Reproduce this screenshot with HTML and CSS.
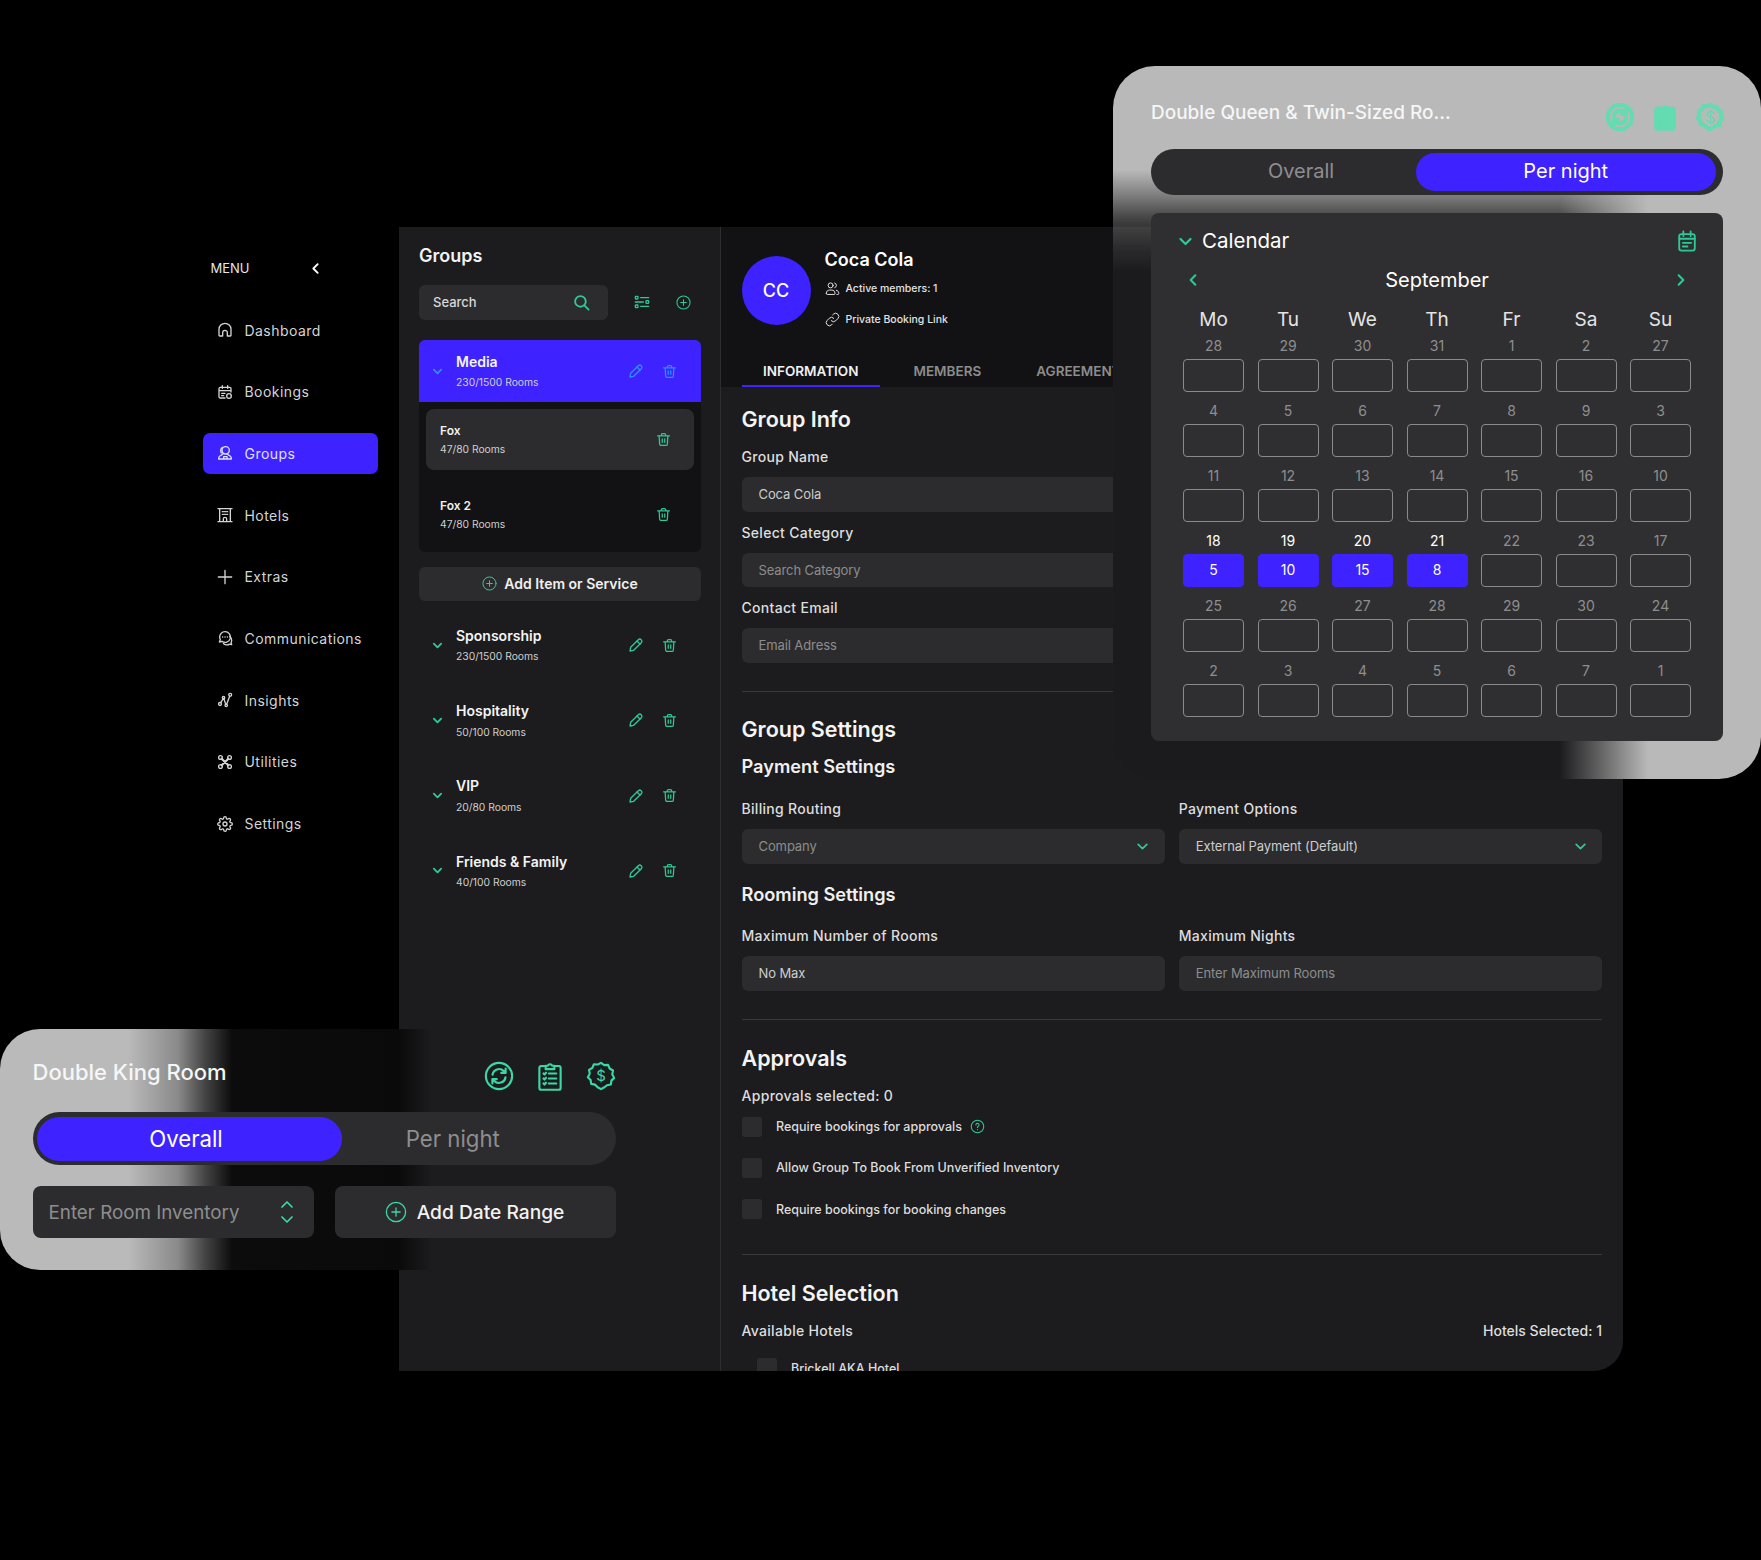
FILE: index.html
```html
<!DOCTYPE html>
<html>
<head>
    <title>Groups</title>
    <link rel="stylesheet" href="styles.css">
</head>
<body>
    <svg class="icon-defs">
        <symbol id="i-home" viewBox="0 0 24 24"><path d="M3 20V11a9 9 0 0 1 18 0v9a1 1 0 0 1-1 1h-4.500v-5a3.500 3.500 0 0 0-7 0v5H4a1 1 0 0 1-1-1Z"/></symbol>
        <symbol id="i-bookings" viewBox="0 0 24 24"><path d="M12 21H5a2 2 0 0 1-2-2V7a2 2 0 0 1 2-2h14a2 2 0 0 1 2 2v5M3 10h18M8 2.500v4M16 2.500v4M7 14h5M7 17.500h3"/><circle cx="18" cy="18" r="3.500"/></symbol>
        <symbol id="i-groups" viewBox="0 0 24 24"><circle cx="13" cy="8" r="5.500"/><path d="M9 13c-.3 2.500-6 2-6.500 6.500V21h19v-1.500c-.5-4.500-6-4-6.500-6.500M8 3.500C6.500 4.500 5.500 6 5.500 8.500c0 1.500.5 2.500 1 3.500M10 21v-3.500h5V21"/></symbol>
        <symbol id="i-hotel" viewBox="0 0 24 24"><path d="M1.500 22h21M1.500 2.500h21M4 2.500V22M20 2.500V22M8 7h1.500M11.250 7h1.500M14.500 7H16M8 11h1.500M11.250 11h1.500M14.500 11H16M9.500 22v-4a2.500 2.500 0 0 1 5 0v4"/></symbol>
        <symbol id="i-plus" viewBox="0 0 24 24"><path d="M12 2v20M2 12h20"/></symbol>
        <symbol id="i-comm" viewBox="0 0 24 24"><path d="M12 2.500a8 8 0 0 0-8 8c0 1.500.4 2.800 1 4l-1.500 3.500 4-1a8 8 0 1 0 4.500-14.500Z"/><path d="M19 9.500c2 1.500 3 3.500 3 6 0 1.300-.3 2.300-.8 3.300l.8 3.200-3.300-.8c-1.500 1-3.200 1.300-5 1-1.700-.3-3-1-4-2"/><path d="M8.500 10.500h.01M12 10.500h.01M15.500 10.500h.01" stroke-width="2.200"/></symbol>
        <symbol id="i-insights" viewBox="0 0 24 24"><path d="M5.500 15.800 9.500 10M10.500 10.500l2.600 8M14.500 18.500l4.500-12"/><circle cx="4.500" cy="18" r="2.200"/><circle cx="9.800" cy="8.500" r="1.800"/><circle cx="13.800" cy="20" r="1.800"/><circle cx="19.800" cy="4.200" r="2.200"/></symbol>
        <symbol id="i-utilities" viewBox="0 0 24 24"><path d="M7 7l10 10M17 7 7 17" stroke-width="3.200"/><circle cx="5.200" cy="5.200" r="2.800"/><circle cx="18.800" cy="5.200" r="2.800"/><circle cx="5.200" cy="18.800" r="2.800"/><circle cx="18.800" cy="18.800" r="2.800"/></symbol>
        <symbol id="i-settings" viewBox="0 0 24 24"><circle cx="12" cy="12" r="3"/><path d="M19.400 15a1.650 1.650 0 0 0 .33 1.820l.06.06a2 2 0 0 1 0 2.830 2 2 0 0 1-2.830 0l-.06-.06a1.650 1.650 0 0 0-1.820-.33 1.650 1.650 0 0 0-1 1.510V21a2 2 0 0 1-2 2 2 2 0 0 1-2-2v-.09A1.650 1.650 0 0 0 9 19.400a1.650 1.650 0 0 0-1.820.33l-.06.06a2 2 0 0 1-2.830 0 2 2 0 0 1 0-2.830l.06-.06a1.650 1.650 0 0 0 .33-1.820 1.650 1.650 0 0 0-1.510-1H3a2 2 0 0 1-2-2 2 2 0 0 1 2-2h.09A1.650 1.650 0 0 0 4.600 9a1.650 1.650 0 0 0-.33-1.820l-.06-.06a2 2 0 0 1 0-2.830 2 2 0 0 1 2.830 0l.06.06a1.650 1.650 0 0 0 1.820.33H9a1.650 1.650 0 0 0 1-1.510V3a2 2 0 0 1 2-2 2 2 0 0 1 2 2v.09a1.650 1.650 0 0 0 1 1.510 1.650 1.650 0 0 0 1.820-.33l.06-.06a2 2 0 0 1 2.830 0 2 2 0 0 1 0 2.830l-.06.06a1.650 1.650 0 0 0-.33 1.820V9a1.650 1.650 0 0 0 1.510 1H21a2 2 0 0 1 2 2 2 2 0 0 1-2 2h-.09a1.650 1.650 0 0 0-1.510 1Z"/></symbol>
        <symbol id="i-search" viewBox="0 0 24 24"><circle cx="10.500" cy="10.500" r="7.500"/><path d="m16 16 6 6"/></symbol>
        <symbol id="i-filter" viewBox="0 0 24 24"><path d="M10 5.500h12M2 12h12M10 18.500h12"/><rect x="2" y="3.500" width="4" height="4" rx="1"/><rect x="18" y="10" width="4" height="4" rx="1"/><rect x="2" y="16.500" width="4" height="4" rx="1"/></symbol>
        <symbol id="i-add" viewBox="0 0 24 24"><circle cx="12" cy="12" r="10.500"/><path d="M12 7.500v9M7.500 12h9"/></symbol>
        <symbol id="i-down" viewBox="0 0 24 24"><path d="m4 8 8 8 8-8"/></symbol>
        <symbol id="i-up" viewBox="0 0 24 24"><path d="m4 16 8-8 8 8"/></symbol>
        <symbol id="i-left" viewBox="0 0 24 24"><path d="m16 4-8 8 8 8"/></symbol>
        <symbol id="i-right" viewBox="0 0 24 24"><path d="m8 4 8 8-8 8"/></symbol>
        <symbol id="i-pencil" viewBox="0 0 24 24"><path d="M3 21l1-5.500L15.500 4a3 3 0 0 1 4.200 0l.3.300a3 3 0 0 1 0 4.200L8.500 20Z"/><path d="m13.500 6 4.500 4.500"/></symbol>
        <symbol id="i-trash" viewBox="0 0 24 24"><path d="M2.500 6h19M8.500 6V4.500a2 2 0 0 1 2-2h3a2 2 0 0 1 2 2V6M5 6l.8 13a2.500 2.500 0 0 0 2.500 2.500h7.400a2.500 2.500 0 0 0 2.500-2.500L19 6M10 11v5.500M14 11v5.500"/></symbol>
        <symbol id="i-users" viewBox="0 0 24 24"><circle cx="9" cy="7" r="4"/><path d="M2 19.500c0-3 2.500-5 5-5h4c2.500 0 5 2 5 5v.5a1.500 1.500 0 0 1-1.500 1.500h-11A1.500 1.500 0 0 1 2 20ZM15.500 3.200a4 4 0 0 1 0 7.600M18 14.800c2.500.5 4 2.300 4 4.700v.5a1.500 1.500 0 0 1-1.500 1.500H19"/></symbol>
        <symbol id="i-link" viewBox="0 0 24 24"><path d="M10 14a5 5 0 0 0 7.100 0l3.400-3.400A5 5 0 0 0 13.400 3.500l-1.200 1.200"/><path d="M14 10a5 5 0 0 0-7.100 0l-3.400 3.400a5 5 0 0 0 7.100 7.100l1.200-1.200"/></symbol>
        <symbol id="i-refresh" viewBox="0 0 24 24"><circle cx="12" cy="12" r="10.500"/><path d="M6.800 11a5.300 5.300 0 0 1 9-3l1.500 1.500M17.300 6v3.500h-3.500M17.200 13a5.300 5.300 0 0 1-9 3l-1.500-1.500M6.700 18v-3.500h3.500"/></symbol>
        <symbol id="i-clipboard" viewBox="0 0 24 24"><path d="M8.500 4H5a1.500 1.500 0 0 0-1.500 1.500v16A1.500 1.500 0 0 0 5 23h14a1.500 1.500 0 0 0 1.500-1.500v-16A1.500 1.500 0 0 0 19 4h-3.500"/><path d="M8.500 6.500V3.800h1.800a1.800 1.800 0 0 1 3.400 0h1.800v2.700ZM11 10h6M11 14h6M11 18h6M6.800 10l.8.800 1.200-1.400M6.800 14l.8.800 1.200-1.400M6.800 18l.8.800 1.200-1.400"/></symbol>
        <symbol id="i-badge" viewBox="0 0 24 24"><path d="M12 1.500l2.600 1.800 3.100-.2 1.200 2.900 2.700 1.600-.6 3 1.500 2.900-2.200 2.200-.4 3.100-3.100.6L14.700 21 12 22.500l-2.700-1.500-2.100-2.100-3.100-.6-.4-3.100-2.200-2.200 1.500-2.900-.6-3 2.700-1.600 1.200-2.900 3.100.2Z"/></symbol>
        <symbol id="i-cal-note" viewBox="0 0 24 24"><rect x="3.500" y="4.500" width="17" height="18" rx="2.500"/><path d="M8 1.500v5M16 1.500v5M3.500 9.500h17M7.500 14h9M7.500 18h5"/></symbol>
        <symbol id="i-help" viewBox="0 0 24 24"><circle cx="12" cy="12" r="10"/><path d="M9.500 9.500a2.500 2.500 0 1 1 3.800 2.100c-.8.500-1.300 1-1.300 2M12 17h.01"/></symbol>
    </svg>

    <div class="app">
        <aside class="sidebar">
            <div class="menu-head">
                <span>MENU</span>
                <svg class="ico ico-back"><use href="#i-left"/></svg>
            </div>
            <nav class="nav">
                <a class="nav-item"><svg class="ico"><use href="#i-home"/></svg>Dashboard</a>
                <a class="nav-item"><svg class="ico"><use href="#i-bookings"/></svg>Bookings</a>
                <a class="nav-item active"><svg class="ico"><use href="#i-groups"/></svg>Groups</a>
                <a class="nav-item"><svg class="ico"><use href="#i-hotel"/></svg>Hotels</a>
                <a class="nav-item"><svg class="ico"><use href="#i-plus"/></svg>Extras</a>
                <a class="nav-item"><svg class="ico"><use href="#i-comm"/></svg>Communications</a>
                <a class="nav-item"><svg class="ico"><use href="#i-insights"/></svg>Insights</a>
                <a class="nav-item"><svg class="ico"><use href="#i-utilities"/></svg>Utilities</a>
                <a class="nav-item"><svg class="ico"><use href="#i-settings"/></svg>Settings</a>
            </nav>
        </aside>

        <section class="groups">
            <h2 class="groups-title">Groups</h2>
            <div class="search-row">
                <div class="search-box">
                    <span>Search</span>
                    <svg class="ico ico-green"><use href="#i-search"/></svg>
                </div>
                <svg class="ico ico-green filter-btn"><use href="#i-filter"/></svg>
                <svg class="ico ico-green add-btn"><use href="#i-add"/></svg>
            </div>

            <div class="group-row selected">
                <svg class="ico chev"><use href="#i-down"/></svg>
                <div class="group-text">
                    <div class="group-name">Media</div>
                    <div class="group-sub">230/1500 Rooms</div>
                </div>
                <svg class="ico edit"><use href="#i-pencil"/></svg>
                <svg class="ico trash"><use href="#i-trash"/></svg>
            </div>
            <div class="sub-list">
                <div class="sub-item current">
                    <div>
                        <div class="sub-name">Fox</div>
                        <div class="group-sub">47/80 Rooms</div>
                    </div>
                    <svg class="ico ico-green trash"><use href="#i-trash"/></svg>
                </div>
                <div class="sub-item">
                    <div>
                        <div class="sub-name">Fox 2</div>
                        <div class="group-sub">47/80 Rooms</div>
                    </div>
                    <svg class="ico ico-green trash"><use href="#i-trash"/></svg>
                </div>
            </div>
            <div class="add-item">
                <svg class="ico ico-green"><use href="#i-add"/></svg>
                Add Item or Service
            </div>

            <div class="group-rows">
                <div class="group-row">
                    <svg class="ico ico-green chev"><use href="#i-down"/></svg>
                    <div class="group-text">
                        <div class="group-name">Sponsorship</div>
                        <div class="group-sub">230/1500 Rooms</div>
                    </div>
                    <svg class="ico ico-green edit"><use href="#i-pencil"/></svg>
                    <svg class="ico ico-green trash"><use href="#i-trash"/></svg>
                </div>
                <div class="group-row">
                    <svg class="ico ico-green chev"><use href="#i-down"/></svg>
                    <div class="group-text">
                        <div class="group-name">Hospitality</div>
                        <div class="group-sub">50/100 Rooms</div>
                    </div>
                    <svg class="ico ico-green edit"><use href="#i-pencil"/></svg>
                    <svg class="ico ico-green trash"><use href="#i-trash"/></svg>
                </div>
                <div class="group-row">
                    <svg class="ico ico-green chev"><use href="#i-down"/></svg>
                    <div class="group-text">
                        <div class="group-name">VIP</div>
                        <div class="group-sub">20/80 Rooms</div>
                    </div>
                    <svg class="ico ico-green edit"><use href="#i-pencil"/></svg>
                    <svg class="ico ico-green trash"><use href="#i-trash"/></svg>
                </div>
                <div class="group-row">
                    <svg class="ico ico-green chev"><use href="#i-down"/></svg>
                    <div class="group-text">
                        <div class="group-name">Friends &amp; Family</div>
                        <div class="group-sub">40/100 Rooms</div>
                    </div>
                    <svg class="ico ico-green edit"><use href="#i-pencil"/></svg>
                    <svg class="ico ico-green trash"><use href="#i-trash"/></svg>
                </div>
            </div>
        </section>

        <main class="detail">
            <header class="detail-head">
                <div class="profile">
                    <div class="avatar">CC</div>
                    <div>
                        <div class="profile-name">Coca Cola</div>
                        <div class="profile-line first"><svg class="ico"><use href="#i-users"/></svg>Active members: 1</div>
                        <div class="profile-line"><svg class="ico"><use href="#i-link"/></svg>Private Booking Link</div>
                    </div>
                </div>
                <div class="tabs">
                    <div class="tab active">INFORMATION</div>
                    <div class="tab">MEMBERS</div>
                    <div class="tab">AGREEMENTS</div>
                </div>
            </header>

            <div class="detail-body">
                <h3 class="h-big info-title">Group Info</h3>
                <label class="lbl lbl-first">Group Name</label>
                <div class="field filled">Coca Cola</div>
                <label class="lbl">Select Category</label>
                <div class="field">Search Category</div>
                <label class="lbl">Contact Email</label>
                <div class="field">Email Adress</div>
                <hr class="rule rule-a">

                <h3 class="h-big settings-title">Group Settings</h3>
                <h4 class="h-mid payment-title">Payment Settings</h4>
                <div class="two-col billing">
                    <div>
                        <label class="lbl lbl-top">Billing Routing</label>
                        <div class="field select">Company<svg class="ico ico-green"><use href="#i-down"/></svg></div>
                    </div>
                    <div>
                        <label class="lbl lbl-top">Payment Options</label>
                        <div class="field select filled">External Payment (Default)<svg class="ico ico-green"><use href="#i-down"/></svg></div>
                    </div>
                </div>
                <h4 class="h-mid rooming-title">Rooming Settings</h4>
                <div class="two-col rooming">
                    <div>
                        <label class="lbl lbl-top">Maximum Number of Rooms</label>
                        <div class="field filled">No Max</div>
                    </div>
                    <div>
                        <label class="lbl lbl-top">Maximum Nights</label>
                        <div class="field">Enter Maximum Rooms</div>
                    </div>
                </div>
                <hr class="rule rule-b">

                <h3 class="h-big approvals-title">Approvals</h3>
                <label class="lbl approvals-count">Approvals selected: 0</label>
                <div class="checks">
                    <div class="check"><span class="box"></span>Require bookings for approvals<svg class="ico ico-green help"><use href="#i-help"/></svg></div>
                    <div class="check"><span class="box"></span>Allow Group To Book From Unverified Inventory</div>
                    <div class="check"><span class="box"></span>Require bookings for booking changes</div>
                </div>
                <hr class="rule rule-c">

                <h3 class="h-big hotels-title">Hotel Selection</h3>
                <div class="hotels-row">
                    <span class="hotels-left">Available Hotels</span>
                    <span>Hotels Selected: 1</span>
                </div>
                <div class="check hotel-check"><span class="box"></span>Brickell AKA Hotel</div>
            </div>
        </main>
    </div>

    <div class="float-card queen-card">
        <div class="card-head">
            <div class="card-title">Double Queen &amp; Twin-Sized Ro...</div>
            <div class="card-icons">
                <svg class="ico"><use href="#i-refresh"/></svg>
                <svg class="ico clip-solid"><use href="#i-clipboard"/></svg>
                <span class="badge-ico"><svg class="ico"><use href="#i-badge"/></svg><b>$</b></span>
            </div>
        </div>
        <div class="toggle">
            <div class="seg seg-left">Overall</div>
            <div class="seg seg-right on">Per night</div>
        </div>
        <div class="calendar">
            <div class="cal-head">
                <svg class="ico ico-green cal-chev"><use href="#i-down"/></svg>
                <span class="cal-title">Calendar</span>
                <svg class="ico ico-green cal-note"><use href="#i-cal-note"/></svg>
            </div>
            <div class="cal-month">
                <svg class="ico ico-green"><use href="#i-left"/></svg>
                <span>September</span>
                <svg class="ico ico-green"><use href="#i-right"/></svg>
            </div>
            <div class="cal-grid weekdays">
                <div>Mo</div><div>Tu</div><div>We</div><div>Th</div><div>Fr</div><div>Sa</div><div>Su</div>
            </div>
            <div class="cal-grid days">
                <div class="day"><span>28</span><i></i></div><div class="day"><span>29</span><i></i></div><div class="day"><span>30</span><i></i></div><div class="day"><span>31</span><i></i></div><div class="day"><span>1</span><i></i></div><div class="day"><span>2</span><i></i></div><div class="day"><span>27</span><i></i></div>
                <div class="day"><span>4</span><i></i></div><div class="day"><span>5</span><i></i></div><div class="day"><span>6</span><i></i></div><div class="day"><span>7</span><i></i></div><div class="day"><span>8</span><i></i></div><div class="day"><span>9</span><i></i></div><div class="day"><span>3</span><i></i></div>
                <div class="day"><span>11</span><i></i></div><div class="day"><span>12</span><i></i></div><div class="day"><span>13</span><i></i></div><div class="day"><span>14</span><i></i></div><div class="day"><span>15</span><i></i></div><div class="day"><span>16</span><i></i></div><div class="day"><span>10</span><i></i></div>
                <div class="day on"><span>18</span><i>5</i></div><div class="day on"><span>19</span><i>10</i></div><div class="day on"><span>20</span><i>15</i></div><div class="day on"><span>21</span><i>8</i></div><div class="day"><span>22</span><i></i></div><div class="day"><span>23</span><i></i></div><div class="day"><span>17</span><i></i></div>
                <div class="day"><span>25</span><i></i></div><div class="day"><span>26</span><i></i></div><div class="day"><span>27</span><i></i></div><div class="day"><span>28</span><i></i></div><div class="day"><span>29</span><i></i></div><div class="day"><span>30</span><i></i></div><div class="day"><span>24</span><i></i></div>
                <div class="day"><span>2</span><i></i></div><div class="day"><span>3</span><i></i></div><div class="day"><span>4</span><i></i></div><div class="day"><span>5</span><i></i></div><div class="day"><span>6</span><i></i></div><div class="day"><span>7</span><i></i></div><div class="day"><span>1</span><i></i></div>
            </div>
        </div>
    </div>

    <div class="float-card king-card">
        <div class="card-head">
            <div class="card-title">Double King Room</div>
            <div class="card-icons">
                <svg class="ico"><use href="#i-refresh"/></svg>
                <svg class="ico"><use href="#i-clipboard"/></svg>
                <span class="badge-ico"><svg class="ico"><use href="#i-badge"/></svg><b>$</b></span>
            </div>
        </div>
        <div class="toggle">
            <div class="seg seg-left on">Overall</div>
            <div class="seg seg-right">Per night</div>
        </div>
        <div class="king-actions">
            <div class="inventory">
                <span>Enter Room Inventory</span>
                <span class="stepper">
                    <svg class="ico"><use href="#i-up"/></svg>
                    <svg class="ico"><use href="#i-down"/></svg>
                </span>
            </div>
            <div class="date-range">
                <svg class="ico"><use href="#i-add"/></svg>
                Add Date Range
            </div>
        </div>
    </div>
</body>
</html>
```

FILE: styles.css
```css
* {
    box-sizing: border-box;
}
body {
    margin: 0;
    width: 1761px;
    height: 1560px;
    position: relative;
    overflow: hidden;
    background-color: #000000;
    color: #ffffff;
    font-family: Inter, "Open Sans", "Liberation Sans", sans-serif;
}
.icon-defs {
    display: none;
}
.ico {
    width: 16px;
    height: 16px;
    flex: none;
    fill: none;
    stroke: currentColor;
    stroke-width: 2;
    stroke-linecap: round;
    stroke-linejoin: round;
}
.ico-green {
    color: #2fc898;
}
h2, h3, h4 {
    margin: 0;
}
hr {
    border: none;
    margin: 0;
}

/* main window */
.app {
    display: flex;
    width: 1623px;
    height: 1143.5px;
    margin-top: 227px;
    padding-left: 203px;
}
.sidebar {
    width: 196px;
    flex: none;
}
.menu-head {
    height: 82.5px;
    display: flex;
    align-items: center;
    justify-content: space-between;
    padding: 0 77px 0 7.500px;
    font-size: 13px;
    color: #e6e6e6;
}
.ico-back {
    width: 13px;
    height: 13px;
    color: #ffffff;
    stroke-width: 3.500;
}
.nav {
    display: flex;
    flex-direction: column;
    gap: 20.7px;
    width: 175px;
}
.nav-item {
    height: 41px;
    display: flex;
    align-items: center;
    gap: 12px;
    padding-left: 13.500px;
    border-radius: 7px;
    font-size: 14px;
    letter-spacing: 0.45px;
    color: #d4d4d4;
}
.nav-item.active {
    background-color: #3e22ff;
    color: #e0e0ff;
}

/* groups column */
.groups {
    width: 322px;
    flex: none;
    padding: 16px 19px 0 20px;
    background-color: #1c1c1e;
    border-right: 1px solid #2e2e30;
}
.groups-title {
    height: 26px;
    line-height: 26px;
    font-size: 18px;
    font-weight: 600;
    color: #f2f2f2;
}
.search-row {
    display: flex;
    align-items: center;
    margin-top: 16px;
    height: 34.5px;
}
.search-box {
    width: 189px;
    height: 100%;
    display: flex;
    align-items: center;
    justify-content: space-between;
    padding: 0 18px 0 14px;
    background-color: #2c2c2e;
    border-radius: 6px;
    font-size: 13px;
    font-weight: 500;
    color: #d8d8d8;
}
.search-box .ico {
    width: 17px;
    height: 17px;
    stroke-width: 2.600;
}
.filter-btn {
    margin-left: 26px;
}
.add-btn {
    margin-left: 26px;
    width: 15px;
    height: 15px;
    stroke-width: 1.7;
}
.group-row {
    height: 62px;
    display: flex;
    align-items: center;
    padding-left: 13px;
}
.selected {
    margin-top: 20.5px;
    background-color: #3e22ff;
    border-radius: 6px 6px 0 0;
    color: #2f8fff;
}
.chev {
    width: 11px;
    height: 11px;
    stroke-width: 4;
}
.group-text {
    width: 166px;
    margin-left: 13px;
    flex: none;
}
.group-name {
    font-size: 14px;
    font-weight: 600;
    line-height: 20px;
    color: #f4f4f4;
}
.group-sub {
    font-size: 10.3px;
    line-height: 16px;
    margin-top: 2.500px;
    color: #cfcfcf;
}
.edit {
    margin-left: 5.500px;
    width: 16px;
    height: 16px;
}
.trash {
    margin-left: 18.500px;
    width: 15px;
    height: 15px;
}
.sub-list {
    display: flex;
    flex-direction: column;
    gap: 13.500px;
    padding: 6.500px 7px;
    background-color: #121214;
    border-radius: 0 0 6px 6px;
}
.sub-item {
    height: 61.5px;
    display: flex;
    align-items: center;
    justify-content: space-between;
    padding: 2px 23px 0 14px;
    border-radius: 8px;
}
.sub-item .trash {
    margin-top: -2px;
}
.sub-item.current {
    background-color: #2c2c2e;
}
.sub-name {
    font-size: 12px;
    font-weight: 600;
    line-height: 16px;
    color: #f0f0f0;
}
.sub-item .group-sub {
    margin-top: 2px;
}
.add-item {
    margin-top: 15.5px;
    height: 33.5px;
    display: flex;
    align-items: center;
    justify-content: center;
    gap: 7px;
    background-color: #2c2c2e;
    border-radius: 6px;
    font-size: 14px;
    font-weight: 600;
    color: #f0f0f0;
}
.add-item .ico {
    width: 15px;
    height: 15px;
    stroke-width: 1.6;
}
.group-rows {
    display: flex;
    flex-direction: column;
    gap: 13.300px;
    margin-top: 13.500px;
}

/* detail column */
.detail {
    flex: 1;
    min-width: 0;
    overflow: hidden;
    background-color: #1c1c1e;
    border-bottom-right-radius: 30px;
}
.detail-head {
    height: 160px;
    padding: 23px 20.5px 0;
    background-color: #121214;
}
.profile {
    display: flex;
    gap: 14px;
}
.avatar {
    width: 69px;
    height: 69px;
    margin-top: 6px;
    display: flex;
    align-items: center;
    justify-content: center;
    border-radius: 50%;
    background-color: #3e22ff;
    font-size: 18px;
    font-weight: 500;
}
.profile-name {
    height: 20px;
    line-height: 20px;
    font-size: 18px;
    font-weight: 600;
}
.profile-line {
    height: 20px;
    margin-top: 11px;
    display: flex;
    align-items: center;
    gap: 6px;
    font-size: 10.5px;
    font-weight: 500;
    color: #e2e2e2;
}
.profile-line.first {
    margin-top: 8px;
}
.profile-line .ico {
    width: 15px;
    height: 15px;
    stroke-width: 1.6;
}
.tabs {
    display: flex;
    gap: 12px;
    height: 32px;
    margin-top: 26px;
    white-space: nowrap;
}
.tab {
    padding: 0 21.500px;
    line-height: 32px;
    font-size: 13.5px;
    font-weight: 600;
    color: #8c8c8c;
    border-bottom: 2px solid transparent;
}
.tab.active {
    color: #f0f0f0;
    border-bottom-color: #3e22ff;
}
.detail-body {
    padding: 0 21px 0 20.5px;
}
.h-big {
    height: 28px;
    line-height: 28px;
    font-size: 21.5px;
    font-weight: 600;
    color: #f4f4f4;
}
.h-mid {
    height: 24px;
    line-height: 24px;
    font-size: 18.2px;
    font-weight: 600;
    color: #f0f0f0;
}
.lbl {
    display: block;
    height: 20px;
    line-height: 20px;
    margin-top: 11px;
    margin-bottom: 10px;
    font-size: 14px;
    font-weight: 500;
    letter-spacing: 0.3px;
    color: #dedede;
}
.lbl-top {
    margin-top: 0;
}
.field {
    height: 34.5px;
    display: flex;
    align-items: center;
    justify-content: space-between;
    padding: 0 15.500px 0 17px;
    background-color: #2c2c2e;
    border-radius: 6px;
    font-size: 13px;
    letter-spacing: -0.1px;
    color: #8d8d8d;
}
.field.filled {
    color: #cdcdcd;
}
.field .ico {
    width: 13px;
    height: 13px;
    stroke-width: 3.200;
}
.info-title {
    margin-top: 17.5px;
}
.lbl-first {
    margin-top: 14.5px;
}
.rule {
    height: 1px;
    background-color: #3a3a3c;
}
.rule-a {
    margin-top: 28px;
}
.settings-title {
    margin-top: 23.5px;
}
.payment-title {
    margin-top: 11px;
}
.two-col {
    display: grid;
    grid-template-columns: 1fr 1fr;
    gap: 14px;
}
.billing {
    margin-top: 21px;
}
.rooming-title {
    margin-top: 18px;
}
.rooming {
    margin-top: 20.5px;
}
.rule-b {
    margin-top: 28px;
}
.approvals-title {
    margin-top: 24px;
}
.approvals-count {
    margin-top: 14.5px;
    margin-bottom: 10.5px;
}
.checks {
    display: flex;
    flex-direction: column;
    gap: 21.3px;
}
.check {
    height: 20px;
    display: flex;
    align-items: center;
    font-size: 12.5px;
    font-weight: 500;
    color: #dcdcdc;
}
.box {
    width: 20px;
    height: 20px;
    flex: none;
    margin-right: 14.500px;
    background-color: #2c2c2e;
    border-radius: 3px;
}
.help {
    width: 15px;
    height: 15px;
    margin-left: 8px;
    stroke-width: 1.700;
}
.rule-c {
    margin-top: 34.9px;
}
.hotels-title {
    margin-top: 24px;
}
.hotels-row {
    display: flex;
    justify-content: space-between;
    margin-top: 14.5px;
    height: 20px;
    line-height: 20px;
    font-size: 14px;
    font-weight: 500;
    color: #dedede;
}
.hotels-left {
    letter-spacing: 0.3px;
}
.hotel-check {
    margin-top: 17px;
    padding-left: 15px;
}

/* floating cards */
.float-card {
    position: absolute;
}
.card-head {
    display: flex;
    justify-content: space-between;
}
.card-title {
    font-weight: 500;
    color: #f6f6f6;
}
.card-icons {
    display: flex;
    color: #3ad8a6;
}
.badge-ico {
    position: relative;
    display: block;
    flex: none;
}
.badge-ico b {
    position: absolute;
    top: 0;
    left: 0;
    right: 0;
    text-align: center;
    font-weight: 400;
}
.toggle {
    display: flex;
    background-color: #2c2c2e;
}
.seg {
    text-align: center;
    color: #8e8e8e;
}
.seg.on {
    background-color: #3e22ff;
    color: #ffffff;
}

.queen-card {
    left: 1113px;
    top: 66px;
    width: 648px;
    height: 713px;
    padding: 26px 38px 0 38px;
    border-radius: 42px;
    background-image:
        linear-gradient(to right, transparent 447px, #b9b9b9 535px),
        linear-gradient(to bottom, #b9b9b9 104px, rgba(185, 185, 185, 0.62) 134px, rgba(185, 185, 185, 0.3) 157px, rgba(185, 185, 185, 0.1) 184px, transparent 205px),
        linear-gradient(to bottom, transparent 150px, #1b1b1d 190px);
}
.queen-card .card-head {
    height: 50px;
    margin-bottom: 7px;
}
.queen-card .card-title {
    font-size: 19px;
    line-height: 42px;
}
.queen-card .card-icons {
    gap: 17px;
    padding: 11px 0 0;
    margin-right: -1px;
    color: #62dcb0;
}
.queen-card .card-icons .ico {
    width: 28px;
    height: 28px;
    stroke-width: 3.400;
}
.queen-card .card-icons .clip-solid {
    fill: currentColor;
    stroke-width: 1.500;
}
.queen-card .badge-ico b {
    font-size: 16px;
    line-height: 28px;
}
.queen-card .toggle {
    height: 45.5px;
    padding: 4px 7.500px 3.500px 0;
    border-radius: 23px;
    font-size: 20px;
    line-height: 36px;
}
.queen-card .seg-left {
    width: 265px;
    padding-left: 35px;
}
.queen-card .seg-right {
    flex: 1;
    border-radius: 19px;
}
.calendar {
    margin-top: 18.5px;
    height: 528px;
    padding: 14px 32px 0;
    background-color: #2f2f31;
    border-radius: 8px;
}
.cal-head {
    height: 28px;
    display: flex;
    align-items: center;
    margin-left: -5px;
}
.cal-chev {
    width: 15px;
    height: 15px;
    stroke-width: 3.500;
}
.cal-title {
    margin-left: 9px;
    margin-top: -2px;
    font-size: 20.5px;
    font-weight: 400;
}
.cal-note {
    width: 22px;
    height: 22px;
    margin-left: auto;
    margin-right: -7px;
}
.cal-month {
    height: 26px;
    margin-top: 12px;
    padding: 0 3px 0 3px;
    display: flex;
    align-items: center;
    justify-content: space-between;
    font-size: 20px;
}
.cal-month .ico {
    width: 14px;
    height: 14px;
    stroke-width: 3.500;
}
.cal-grid {
    display: grid;
    grid-template-columns: repeat(7, 61px);
    column-gap: 13.500px;
    text-align: center;
}
.weekdays {
    margin-top: 15px;
    height: 24px;
    line-height: 24px;
    font-size: 19px;
    color: #e4e4e4;
}
.days {
    margin-top: 4px;
    row-gap: 9px;
}
.day span {
    display: block;
    height: 20px;
    line-height: 20px;
    font-size: 14px;
    color: #8e8e8e;
}
.day i {
    display: block;
    height: 33px;
    margin-top: 3px;
    border: 1.5px solid #8a8a8a;
    border-radius: 4px;
    font-style: normal;
}
.day.on span {
    color: #ffffff;
}
.day.on i {
    border-color: #3e22ff;
    background-color: #3e22ff;
    line-height: 30px;
    font-size: 14px;
    color: #ffffff;
}

.king-card {
    left: 0;
    top: 1029px;
    width: 649px;
    height: 241px;
    padding: 26px 33px 0 32.5px;
    border-radius: 40px 0 0 40px;
    background-image: linear-gradient(to right, #bababa 128px, #8a8a8a 178px, #444444 205px, #0c0c0c 232px, #0a0a0a 399px, transparent 432px);
}
.king-card .card-head {
    height: 50px;
    margin-bottom: 7px;
}
.king-card .card-title {
    font-size: 22px;
    line-height: 34px;
}
.king-card .card-icons {
    gap: 21px;
    padding: 6px 0 0;
    margin-right: 0;
}
.king-card .card-icons .ico {
    width: 30px;
    height: 30px;
    stroke-width: 1.7;
}
.king-card .badge-ico b {
    font-size: 15px;
    line-height: 30px;
}
.king-card .toggle {
    height: 53px;
    padding: 5px 0 4px 4px;
    border-radius: 27px;
    font-size: 22.2px;
    line-height: 43px;
}
.king-card .seg-left {
    width: 305px;
    padding-right: 6px;
    border-radius: 22px;
}
.king-card .seg-right {
    flex: 1;
    padding-right: 52px;
}
.king-actions {
    display: grid;
    grid-template-columns: 281px 281px;
    gap: 21.5px;
    margin-top: 21px;
}
.inventory, .date-range {
    height: 52px;
    display: flex;
    align-items: center;
    background-color: #2c2c2e;
    border-radius: 8px;
    font-size: 19px;
}
.inventory {
    justify-content: space-between;
    padding: 0 18px 0 16px;
    font-size: 18.8px;
    color: #8e8e8e;
}
.stepper {
    display: flex;
    flex-direction: column;
    gap: 0;
    color: #3ad8a6;
}
.stepper .ico {
    width: 18px;
    height: 15px;
    stroke-width: 2.800;
}
.date-range {
    justify-content: center;
    gap: 10px;
    padding-right: 2px;
    font-size: 19.2px;
    font-weight: 500;
    color: #f2f2f2;
}
.date-range .ico {
    width: 22px;
    height: 22px;
    color: #3ad8a6;
    stroke-width: 1.4;
}
```
